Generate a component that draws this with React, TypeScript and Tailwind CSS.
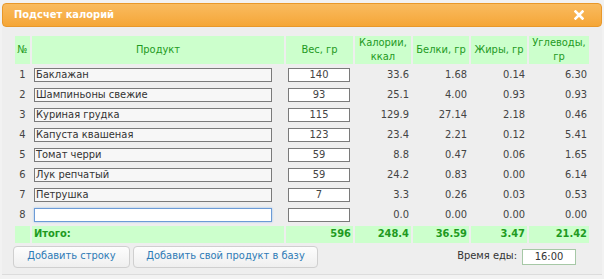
import React from "react";

type Row = {
  name: string;
  weight: string;
  kcal: string;
  protein: string;
  fat: string;
  carbs: string;
};

const rows: Row[] = [
  { name: "Баклажан", weight: "140", kcal: "33.6", protein: "1.68", fat: "0.14", carbs: "6.30" },
  { name: "Шампиньоны свежие", weight: "93", kcal: "25.1", protein: "4.00", fat: "0.93", carbs: "0.93" },
  { name: "Куриная грудка", weight: "115", kcal: "129.9", protein: "27.14", fat: "2.18", carbs: "0.46" },
  { name: "Капуста квашеная", weight: "123", kcal: "23.4", protein: "2.21", fat: "0.12", carbs: "5.41" },
  { name: "Томат черри", weight: "59", kcal: "8.8", protein: "0.47", fat: "0.06", carbs: "1.65" },
  { name: "Лук репчатый", weight: "59", kcal: "24.2", protein: "0.83", fat: "0.00", carbs: "6.14" },
  { name: "Петрушка", weight: "7", kcal: "3.3", protein: "0.26", fat: "0.03", carbs: "0.53" },
  { name: "", weight: "", kcal: "0.0", protein: "0.00", fat: "0.00", carbs: "0.00" },
];

const font = "font-['DejaVu_Sans_Condensed','Liberation_Sans',sans-serif]";

function CloseIcon(): React.ReactElement {
  return (
    <svg width="10" height="10" viewBox="0 0 10 10">
      <path d="M1.5 1.5 L8.5 8.5 M8.5 1.5 L1.5 8.5" stroke="#fff" strokeWidth={2.6} strokeLinecap="square" />
    </svg>
  );
}

export default function App(): React.ReactElement {
  return (
    <div className={`w-[604px] h-[279px] bg-[#f2f2f2] pt-[3px] px-[2px] ${font} text-[11px] text-[#333]`}>
      {/* Title bar */}
      <div className="h-[24px] flex items-center justify-between pl-[11px] pr-[17px] rounded-[4px] border border-[#e8982a] bg-gradient-to-b from-[#f9bb5e] to-[#f5a636]">
        <span className="font-bold text-white text-[11px]">Подсчет калорий</span>
        <CloseIcon />
      </div>

      {/* Content */}
      <div className="bg-[#eeeeee] pl-[11px] pt-[7px] h-[248px] border-b border-[#dcdcdc]">
        <table className="table-fixed border-separate border-spacing-[2px] w-[578px]">
          <colgroup>
            <col className="w-[15px]" />
            <col className="w-[252px]" />
            <col className="w-[67px]" />
            <col className="w-[56px]" />
            <col className="w-[56px]" />
            <col className="w-[56px]" />
            <col className="w-[60px]" />
          </colgroup>
          <thead>
            <tr className="h-[27px] text-[#1f9a1f] leading-[14px]">
              <th className="bg-[#ccffcc] font-normal">№</th>
              <th className="bg-[#ccffcc] font-normal">Продукт</th>
              <th className="bg-[#ccffcc] font-normal">Вес, гр</th>
              <th className="bg-[#ccffcc] font-normal">Калории,<br />ккал</th>
              <th className="bg-[#ccffcc] font-normal">Белки, гр</th>
              <th className="bg-[#ccffcc] font-normal">Жиры, гр</th>
              <th className="bg-[#ccffcc] font-normal">Углеводы,<br />гр</th>
            </tr>
          </thead>
          <tbody>
            {rows.map((r, i) => {
              const focused = i === rows.length - 1;
              return (
                <tr key={i} className="h-[18px] text-[#444]">
                  <td className="text-center p-0">{i + 1}</td>
                  <td className="p-0 pl-[2px]">
                    <div
                      className={
                        focused
                          ? "w-[238px] h-[14px] border border-[#6c9bd6] bg-white shadow-[0_0_2px_#9cc3f0]"
                          : "w-[238px] h-[14px] border border-[#7a7a7a] bg-[#f7f7f7] pl-[1px] leading-[12px] text-[#333] whitespace-nowrap"
                      }
                    >
                      {r.name}
                    </div>
                  </td>
                  <td className="p-0 pl-[2px]">
                    <div className="w-[62px] h-[14px] border border-[#7a7a7a] bg-white text-center leading-[12px]">
                      {r.weight}
                    </div>
                  </td>
                  <td className="text-right p-0 pr-[2px]">{r.kcal}</td>
                  <td className="text-right p-0 pr-[2px]">{r.protein}</td>
                  <td className="text-right p-0 pr-[2px]">{r.fat}</td>
                  <td className="text-right p-0 pr-[2px]">{r.carbs}</td>
                </tr>
              );
            })}
            <tr className="h-[16px] font-bold text-[#1f9a1f]">
              <td className="bg-[#ccffcc] p-0"></td>
              <td className="bg-[#ccffcc] p-0 pl-[2px]">Итого:</td>
              <td className="bg-[#ccffcc] p-0 pr-[2px] text-right">596</td>
              <td className="bg-[#ccffcc] p-0 pr-[2px] text-right">248.4</td>
              <td className="bg-[#ccffcc] p-0 pr-[2px] text-right">36.59</td>
              <td className="bg-[#ccffcc] p-0 pr-[2px] text-right">3.47</td>
              <td className="bg-[#ccffcc] p-0 pr-[2px] text-right">21.42</td>
            </tr>
          </tbody>
        </table>

        {/* Footer */}
        <div className="flex items-center mt-[1px] pr-[26px]">
          <button className="h-[22px] w-[117px] rounded-[4px] border border-[#cfcfcf] bg-gradient-to-b from-[#fdfdfd] to-[#efefef] text-[#2e7bb6] text-[11px]">
            Добавить строку
          </button>
          <button className="ml-[3px] h-[22px] w-[185px] rounded-[4px] border border-[#cfcfcf] bg-gradient-to-b from-[#fdfdfd] to-[#efefef] text-[#2e7bb6] text-[11px]">
            Добавить свой продукт в базу
          </button>
          <span className="ml-auto text-[#333]">Время еды:</span>
          <div className="ml-[5px] w-[54px] h-[16px] border border-[#a6c8a6] bg-white text-center leading-[14px] text-[#333]">
            16:00
          </div>
        </div>
      </div>
    </div>
  );
}
